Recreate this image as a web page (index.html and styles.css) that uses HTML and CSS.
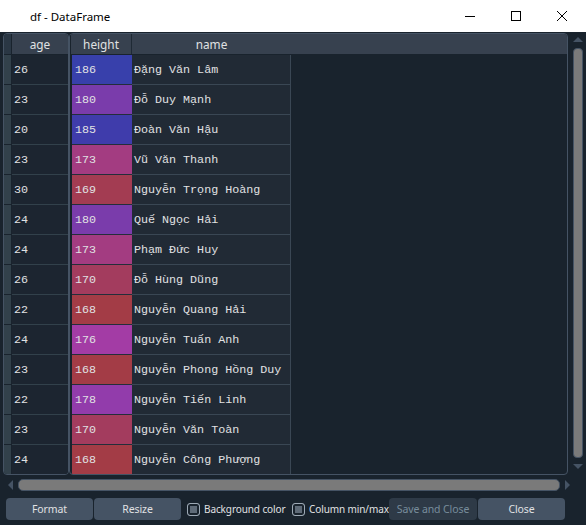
FILE: index.html
```html
<!DOCTYPE html>
<html>
<head>
<meta charset="utf-8">
<link rel="stylesheet" href="styles.css">
</head>
<body>
<div class="window">
  <div class="titlebar">
    <div class="title">df - DataFrame</div>
    <div class="controls">
      <div class="ctl"><svg width="12" height="12" viewBox="0 0 12 12"><path d="M1 6.5h10" stroke="#000" stroke-width="1"/></svg></div>
      <div class="ctl"><svg width="12" height="12" viewBox="0 0 12 12"><rect x="1.5" y="1.5" width="9" height="9" fill="none" stroke="#000" stroke-width="1"/></svg></div>
      <div class="ctl"><svg width="12" height="12" viewBox="0 0 12 12"><path d="M1 1l10 10M11 1L1 11" stroke="#000" stroke-width="1"/></svg></div>
    </div>
  </div>
  <div class="body">
    <div class="tables">
      <div class="frozen">
        <div class="hdr"><div class="corner"></div><div class="hcell hage">age</div></div>
        <div class="rows">
          <div class="row"><div class="rh"></div><div class="c age">26</div></div>
          <div class="row"><div class="rh"></div><div class="c age">23</div></div>
          <div class="row"><div class="rh"></div><div class="c age">20</div></div>
          <div class="row"><div class="rh"></div><div class="c age">23</div></div>
          <div class="row"><div class="rh"></div><div class="c age">30</div></div>
          <div class="row"><div class="rh"></div><div class="c age">24</div></div>
          <div class="row"><div class="rh"></div><div class="c age">24</div></div>
          <div class="row"><div class="rh"></div><div class="c age">26</div></div>
          <div class="row"><div class="rh"></div><div class="c age">22</div></div>
          <div class="row"><div class="rh"></div><div class="c age">24</div></div>
          <div class="row"><div class="rh"></div><div class="c age">23</div></div>
          <div class="row"><div class="rh"></div><div class="c age">22</div></div>
          <div class="row"><div class="rh"></div><div class="c age">23</div></div>
          <div class="row"><div class="rh"></div><div class="c age">24</div></div>
        </div>
      </div>
      <div class="main">
        <div class="hdr"><div class="hsp"></div><div class="hcell hh">height</div><div class="hcell hn">name</div><div class="hfill"></div></div>
        <div class="rows">
          <div class="row"><div class="c h" style="background:rgb(56,64,171)">186</div><div class="c n">Đặng Văn Lâm</div></div>
          <div class="row"><div class="c h" style="background:rgb(122,60,171)">180</div><div class="c n">Đỗ Duy Mạnh</div></div>
          <div class="row"><div class="c h" style="background:rgb(63,60,171)">185</div><div class="c n">Đoàn Văn Hậu</div></div>
          <div class="row"><div class="c h" style="background:rgb(163,60,129)">173</div><div class="c n">Vũ Văn Thanh</div></div>
          <div class="row"><div class="c h" style="background:rgb(163,60,82)">169</div><div class="c n">Nguyễn Trọng Hoàng</div></div>
          <div class="row"><div class="c h" style="background:rgb(122,60,171)">180</div><div class="c n">Quế Ngọc Hải</div></div>
          <div class="row"><div class="c h" style="background:rgb(163,60,129)">173</div><div class="c n">Phạm Đức Huy</div></div>
          <div class="row"><div class="c h" style="background:rgb(163,60,94)">170</div><div class="c n">Đỗ Hùng Dũng</div></div>
          <div class="row"><div class="c h" style="background:rgb(163,60,70)">168</div><div class="c n">Nguyễn Quang Hải</div></div>
          <div class="row"><div class="c h" style="background:rgb(163,60,165)">176</div><div class="c n">Nguyễn Tuấn Anh</div></div>
          <div class="row"><div class="c h" style="background:rgb(163,60,70)">168</div><div class="c n">Nguyễn Phong Hồng Duy</div></div>
          <div class="row"><div class="c h" style="background:rgb(146,60,171)">178</div><div class="c n">Nguyễn Tiến Linh</div></div>
          <div class="row"><div class="c h" style="background:rgb(163,60,94)">170</div><div class="c n">Nguyễn Văn Toàn</div></div>
          <div class="row"><div class="c h" style="background:rgb(163,60,70)">168</div><div class="c n">Nguyễn Công Phượng</div></div>
        </div>
      </div>
      <div class="vscroll">
        <div class="arr-up"></div>
        <div class="vhandle"></div>
        <div class="arr-down"></div>
      </div>
    </div>
    <div class="hscroll">
      <div class="arr-left"></div>
      <div class="hhandle"></div>
      <div class="arr-right"></div>
    </div>
    <div class="buttons">
      <div class="btn b1">Format</div>
      <div class="btn b2">Resize</div>
      <div class="chk chk1"><span class="box"></span>Background color</div>
      <div class="chk chk2"><span class="box"></span>Column min/max</div>
      <div class="btn disabled">Save and Close</div>
      <div class="btn">Close</div>
    </div>
  </div>
</div>
</body>
</html>
```
FILE: styles.css
```css
* { box-sizing: border-box; }
html, body { margin: 0; padding: 0; }
body {
  background: #19232d;
  width: 586px;
  height: 525px;
  overflow: hidden;
  font-family: "Noto Sans", "Open Sans", "Liberation Sans", sans-serif;
  color: #e0e1e3;
}
.window { width: 586px; height: 525px; }
.titlebar {
  height: 32px;
  background: #ffffff;
  display: flex;
  align-items: center;
  justify-content: space-between;
}
.title {
  padding-left: 30px;
  font-size: 11.5px;
  color: #000;
}
.controls { display: flex; height: 32px; margin-right: 1px; }
.ctl { width: 46px; height: 32px; display: flex; align-items: center; justify-content: center; }

.body { padding-top: 1px; }
.tables { display: flex; height: 442px; }
.frozen {
  margin-left: 3px;
  width: 66px;
  height: 442px;
  border: 1px solid #455364;
  border-radius: 4px;
  overflow: hidden;
  display: flex;
  flex-direction: column;
}
.main {
  width: 499px;
  height: 442px;
  border: 1px solid #455364;
  border-radius: 4px;
  overflow: hidden;
  display: flex;
  flex-direction: column;
}
.hdr {
  display: flex;
  height: 21px;
  flex: none;
  border-bottom: 1px solid #19232d;
}
.corner { width: 8px; background: #2a3744; border-right: 1px solid #19232d; }
.hcell {
  background: #37414f;
  font-size: 11.8px;
  display: flex;
  align-items: center;
  justify-content: center;
  line-height: 1;
  padding-top: 1px;
}
.hage { flex: 1; }
.hsp { width: 1px; background: #19232d; }
.hh { width: 61px; border-right: 1px solid #1f2a35; }
.hn { width: 159px; }
.hfill { flex: 1; background: #37414f; }
.rows { display: flex; flex-direction: column; }
.row { display: flex; height: 30px; flex: none; }
.rh { width: 8px; background: #32414b; border-right: 1px solid #19232d; border-bottom: 1px solid #19232d; }
.c {
  font-family: "Liberation Mono", "DejaVu Sans Mono", monospace;
  font-size: 11.7px;
  display: flex;
  align-items: center;
  white-space: nowrap;
  border-bottom: 1px solid #32414b;
  padding-top: 1px;
}
.age { flex: 1; padding-left: 2px; background: #1c2530; }
.main .row { padding-left: 2px; }
.h { width: 60px; padding-left: 3px; border-bottom-color: #232e3a; }
.n { width: 159px; padding-left: 2px; background: #212a35; border-right: 1px solid #3a4754; border-bottom-color: #3a4754; }

.vscroll {
  width: 16px;
  margin-left: 1px;
  display: flex;
  flex-direction: column;
  align-items: center;
}
.arr-up { width: 0; height: 0; border-left: 5px solid transparent; border-right: 5px solid transparent; border-bottom: 5px solid #455364; margin-top: 4px; margin-left: 1px; }
.vhandle { width: 10px; flex: 1; margin: 6px 0 6px 1px; background: #7a7a7a; border: 1px solid #455364; border-radius: 4px; }
.arr-down { width: 0; height: 0; border-left: 5px solid transparent; border-right: 5px solid transparent; border-top: 5px solid #455364; margin-bottom: 6px; margin-left: 1px; }

.hscroll {
  display: flex;
  align-items: center;
  height: 14px;
  margin-top: 3px;
  padding-left: 8px;
  width: 570px;
}
.arr-left { width: 0; height: 0; border-top: 5px solid transparent; border-bottom: 5px solid transparent; border-right: 5px solid #455364; }
.hhandle { flex: 1; height: 12px; margin: 0 5px 0 5px; background: #7a7a7a; border: 1px solid #455364; border-radius: 5px; }
.arr-right { width: 0; height: 0; border-top: 5px solid transparent; border-bottom: 5px solid transparent; border-left: 5px solid #455364; }

.buttons {
  display: flex;
  align-items: center;
  margin-top: 6px;
  padding-left: 6px;
  height: 22px;
  font-size: 10px;
  letter-spacing: -0.1px;
}
.btn {
  width: 87px;
  height: 22px;
  background: #455364;
  border-radius: 4px;
  display: flex;
  align-items: center;
  justify-content: center;
  white-space: nowrap;
  flex: none;
  font-size: 10.5px;
}
.b1 { margin-right: 1px; }
.btn.disabled { background: #2e3a47; color: #788d9c; width: 88px; margin-right: 1px; }
.chk {
  display: flex;
  align-items: center;
  white-space: nowrap;
  flex: none;
}
.chk1 { margin-left: 6px; width: 105px; }
.chk2 { width: 97px; }
.box {
  width: 13px;
  height: 13px;
  border: 1px solid #9da9b5;
  border-radius: 3px;
  margin-right: 4px;
  display: inline-block;
  box-shadow: inset 0 0 0 2px #19232d;
  background: #5f6b78;
  flex: none;
}
```
